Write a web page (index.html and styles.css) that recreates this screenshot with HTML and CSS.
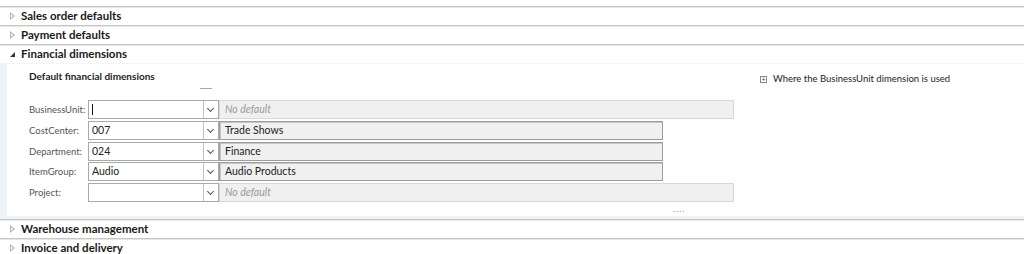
FILE: index.html
```html
<!DOCTYPE html>
<html lang="en">

<head>
    <meta charset="UTF-8">
    <meta name="viewport" content="width=device-width, initial-scale=1.0">
    <title>Financial dimensions</title>
    <link rel="stylesheet" href="styles.css">
</head>

<body>
    <div class="topGap"></div>

    <div class="fastTab"><span class="arrow closed"></span>Sales order defaults</div>
    <div class="fastTab"><span class="arrow closed"></span>Payment defaults</div>
    <div class="fastTab"><span class="arrow open"></span>Financial dimensions</div>

    <!-- 펼쳐진 탭 내용 -->
    <section class="tabBody">
        <div class="headRow">
            <div class="groupTitle">
                <h4>Default financial dimensions</h4>
                <div class="dash"></div>
            </div>
            <div class="usedLink"><span class="plusBox">+</span>Where the BusinessUnit dimension is used</div>
        </div>

        <div class="dimForm">
            <div class="dimRow">
                <label>BusinessUnit:</label>
                <div class="combo"><span class="value"><span class="caret"></span></span><span class="drop"></span></div>
                <div class="desc empty">No default</div>
            </div>
            <div class="dimRow">
                <label>CostCenter:</label>
                <div class="combo"><span class="value">007</span><span class="drop"></span></div>
                <div class="desc">Trade Shows</div>
            </div>
            <div class="dimRow">
                <label>Department:</label>
                <div class="combo"><span class="value">024</span><span class="drop"></span></div>
                <div class="desc">Finance</div>
            </div>
            <div class="dimRow">
                <label>ItemGroup:</label>
                <div class="combo"><span class="value">Audio</span><span class="drop"></span></div>
                <div class="desc">Audio Products</div>
            </div>
            <div class="dimRow">
                <label>Project:</label>
                <div class="combo"><span class="value"></span><span class="drop"></span></div>
                <div class="desc empty">No default</div>
            </div>
        </div>

        <div class="moreDots">....</div>
    </section>

    <div class="fastTab"><span class="arrow closed"></span>Warehouse management</div>
    <div class="fastTab"><span class="arrow closed"></span>Invoice and delivery</div>
</body>

</html>
```

FILE: styles.css
```css
* {
    margin: 0;
    padding: 0;
    box-sizing: border-box;
}

body {
    font-family: Lato, "Open Sans", sans-serif;
    font-size: 10.5px;
    color: #1e1e1e;
    background: #fff;
    width: 1024px;
    height: 254px;
    overflow: hidden;
}

.topGap {
    height: 6px;
}

.fastTab {
    height: 19px;
    display: flex;
    align-items: center;
    border-top: 1px solid #c6c6c6;
    box-shadow: inset 0 1px 0 #e6e6e6;
    font-weight: bold;
    font-size: 11.5px;
    color: #1a1a1a;
    padding-left: 9px;
    padding-bottom: 1px;
}

.arrow {
    width: 12px;
    height: 8px;
    position: relative;
}

.arrow.closed::before {
    content: "";
    position: absolute;
    left: 1px;
    top: 0;
    border-style: solid;
    border-width: 4px 0 4px 5px;
    border-color: transparent transparent transparent #b4b4b4;
}

.arrow.closed::after {
    content: "";
    position: absolute;
    left: 2px;
    top: 2px;
    border-style: solid;
    border-width: 2px 0 2px 2.5px;
    border-color: transparent transparent transparent #fff;
}

.arrow.open::before {
    content: "";
    position: absolute;
    left: 1px;
    top: 2px;
    border-style: solid;
    border-width: 0 0 5px 5px;
    border-color: transparent transparent #333 transparent;
}

.tabBody {
    height: 156px;
    border-left: 7px solid #eef3f9;
    border-bottom: 3px solid #eef3f9;
    border-top: 1px solid #f2f5f9;
    padding-left: 22px;
    position: relative;
}

.headRow {
    display: flex;
    padding-top: 5px;
}

.groupTitle {
    width: 731px;
}

.groupTitle h4 {
    font-size: 10px;
    font-weight: bold;
    line-height: 14px;
}

.dash {
    margin: 5px 0 0 171px;
    width: 12px;
    height: 1px;
    background: #a8a8a8;
}

.usedLink {
    display: flex;
    align-items: center;
    font-size: 9.5px;
    line-height: 14px;
    color: #222;
}

.plusBox {
    width: 7px;
    height: 7px;
    border: 1px solid #8a8a8a;
    font-size: 7px;
    line-height: 5px;
    text-align: center;
    margin-right: 6px;
    color: #444;
}

.dimForm {
    margin-top: 11px;
    display: flex;
    flex-direction: column;
    gap: 1.75px;
}

.dimRow {
    display: flex;
    align-items: center;
    height: 19px;
}

.dimRow label {
    width: 59px;
    flex-shrink: 0;
    font-size: 9.5px;
    color: #555;
    white-space: nowrap;
}

.combo {
    width: 131px;
    flex-shrink: 0;
    height: 19px;
    display: flex;
    border: 1px solid #a9a9a9;
    background: #fff;
}

.combo .value {
    flex: 1;
    padding-left: 3px;
    line-height: 17px;
    color: #222;
    position: relative;
}

.caret {
    position: absolute;
    left: 3px;
    top: 3px;
    width: 1px;
    height: 11px;
    background: #111;
}

.combo .drop {
    width: 15px;
    border-left: 1px solid #c4c4c4;
    position: relative;
}

.combo .drop::after {
    content: "";
    position: absolute;
    left: 4px;
    top: 5px;
    width: 4px;
    height: 4px;
    border-right: 1.5px solid #555;
    border-bottom: 1.5px solid #555;
    transform: rotate(45deg);
}

.desc {
    width: 444px;
    flex-shrink: 0;
    height: 19px;
    background: #f0f0f0;
    border: 1px solid #9c9c9c;
    box-shadow: inset 1px 1px 0 #c8c8c8;
    line-height: 17px;
    padding-left: 5px;
    color: #222;
}

.desc.empty {
    width: 515px;
    border-color: #d8d8d8;
    box-shadow: none;
    font-style: italic;
    color: #9a9a9a;
}

.moreDots {
    position: absolute;
    left: 666px;
    top: 139px;
    font-size: 9px;
    letter-spacing: 1px;
    color: #999;
}
```
